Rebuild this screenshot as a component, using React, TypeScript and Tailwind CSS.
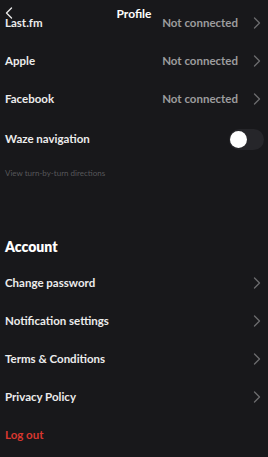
import React from 'react';

const font = { fontFamily: 'Lato, "Noto Sans", sans-serif' };

const Chevron = ({ className = '' }: { className?: string }) => (
  <svg width="8" height="12" viewBox="0 0 8 12" className={className} fill="none">
    <path d="M1.5 1L6.5 6L1.5 11" stroke="currentColor" strokeWidth="1.4" strokeLinecap="round" strokeLinejoin="round" />
  </svg>
);

const Row = ({ label, value, chevron = true, danger = false }: RowProps) => (
  <div className="flex h-[38px] items-center pl-[5px] pr-[7px]">
    <span className={`flex-1 text-[11.5px] font-bold ${danger ? 'text-[#d8372f]' : 'text-[#ececec]'}`}>{label}</span>
    {value && <span className="mr-[15px] text-[11.5px] font-bold text-[#9c9c9e]">{value}</span>}
    {chevron && <Chevron className="text-[#6a6a6d]" />}
  </div>
);

interface RowProps {
  label: string;
  value?: string;
  chevron?: boolean;
  danger?: boolean;
}

const services = ['Last.fm', 'Apple', 'Facebook'];
const account = ['Change password', 'Notification settings', 'Terms & Conditions', 'Privacy Policy'];

export default function App() {
  return (
    <div className="relative h-[457px] w-[268px] overflow-hidden bg-[#18181b]" style={font}>
      <div className="pt-[4px]">
        {services.map((s) => (
          <Row key={s} label={s} value="Not connected" />
        ))}
        <div className="flex h-[42px] items-center pl-[5px] pr-[4px]">
          <span className="flex-1 text-[11.5px] font-bold text-[#ececec]">Waze navigation</span>
          <div className="flex h-[21px] w-[35px] items-center rounded-full bg-[#26262a] pl-[1px]">
            <div className="h-[17px] w-[17px] rounded-full bg-white" />
          </div>
        </div>
        <p className="mt-[8px] pl-[5px] text-[8px] leading-[10px] text-[#57575a]">View turn-by-turn directions</p>
        <h2 className="mt-[60px] mb-[8px] pl-[5px] text-[14px] font-extrabold leading-[18px] text-white">Account</h2>
        {account.map((a) => (
          <Row key={a} label={a} />
        ))}
        <Row label="Log out" chevron={false} danger />
      </div>
      <div className="absolute left-0 top-0 flex w-full items-center justify-center pt-[7px]">
        <svg width="8" height="12" viewBox="0 0 8 12" className="absolute left-[5px] top-[7px] text-[#e8e8e8]" fill="none">
          <path d="M6.5 1L1.5 6L6.5 11" stroke="currentColor" strokeWidth="1.4" strokeLinecap="round" strokeLinejoin="round" />
        </svg>
        <span className="text-[12px] font-bold leading-[14px] text-white">Profile</span>
      </div>
    </div>
  );
}
